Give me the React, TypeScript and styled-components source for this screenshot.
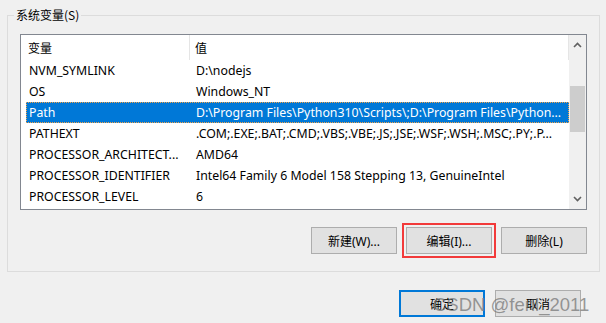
import React from "react";
import styled, { createGlobalStyle } from "styled-components";

const Global = createGlobalStyle`
  html, body { margin: 0; padding: 0; background: #f0f0f0; }
  body { font-family: "Noto Sans", "Noto Sans CJK SC", sans-serif; font-size: 12px; color: #000; }
`;

const Page = styled.div`
  position: relative;
  width: 606px;
  height: 323px;
  box-sizing: border-box;
  padding: 7px 6px 0 7px;
  background: #f0f0f0;
  display: flex;
  flex-direction: column;
  overflow: hidden;
`;

const Group = styled.fieldset`
  margin: 0;
  border: 1px solid #dcdcdc;
  padding: 11px 12px 17px 12px;
  display: flex;
  flex-direction: column;
`;

const Legend = styled.legend`
  margin-left: -6px;
  padding: 0 2px;
  line-height: 16px;
  font-family: "Noto Sans CJK SC", sans-serif;
  font-size: 12px;
`;

const ListBox = styled.div`
  height: 176px;
  box-sizing: border-box;
  border: 1px solid #828790;
  background: #fff;
  display: flex;
`;

const ListMain = styled.div`
  flex: 1;
  min-width: 0;
  display: flex;
  flex-direction: column;
`;

const Header = styled.div`
  height: 25px;
  display: flex;
  align-items: stretch;
  border-right: 1px solid #e5e5e5;
`;

const HeadCell = styled.div<{ $w?: number; $pad: number; $sep?: boolean }>`
  ${(p) => (p.$w ? `width: ${p.$w}px;` : "flex: 1;")}
  box-sizing: border-box;
  padding-left: ${(p) => p.$pad}px;
  display: flex;
  align-items: center;
  font-family: "Noto Sans CJK SC", sans-serif;
  font-size: 12px;
  ${(p) => (p.$sep ? "border-right: 1px solid #e5e5e5;" : "")}
`;

const Row = styled.div<{ $sel?: boolean }>`
  height: 21px;
  margin-left: 5px;
  display: flex;
  align-items: center;
  box-sizing: border-box;
  font-size: 12.3px;
  background: ${(p) => (p.$sel ? "#0078d7" : "transparent")};
  color: ${(p) => (p.$sel ? "#fff" : "#000")};
  ${(p) => (p.$sel ? "outline: 1px dotted #f2a44a; outline-offset: -1px;" : "")}
`;

const Cell = styled.div<{ $w?: number; $pad: number }>`
  ${(p) => (p.$w ? `width: ${p.$w}px;` : "flex: 1;")}
  min-width: 0;
  box-sizing: border-box;
  padding-left: ${(p) => p.$pad}px;
  padding-right: 6px;
  white-space: nowrap;
  overflow: hidden;
  text-overflow: ellipsis;
`;

const ScrollBar = styled.div`
  width: 17px;
  background: #f0f0f0;
  display: flex;
  flex-direction: column;
  align-items: center;
`;

const Arrow = styled.div`
  height: 20px;
  width: 17px;
  display: flex;
  align-items: center;
  justify-content: center;
`;

const Track = styled.div`
  flex: 1;
  width: 100%;
  position: relative;
`;

const Thumb = styled.div`
  position: absolute;
  left: 1px;
  right: 1px;
  top: 31px;
  height: 46px;
  background: #cdcdcd;
`;

const ButtonRow = styled.div<{ $gap: number; $top?: number }>`
  display: flex;
  justify-content: flex-end;
  gap: ${(p) => p.$gap}px;
  margin-top: ${(p) => p.$top ?? 0}px;
`;

const Btn = styled.button<{ $primary?: boolean; $marked?: boolean }>`
  width: 86px;
  height: 27px;
  box-sizing: border-box;
  background: #e1e1e1;
  border: ${(p) => (p.$primary ? "2px solid #0078d7" : "1px solid #adadad")};
  padding: 0;
  font-family: "Noto Sans", "Noto Sans CJK SC", sans-serif;
  font-size: 12px;
  color: #000;
  ${(p) => (p.$marked ? "outline: 2px solid #f23a3a; outline-offset: 2px;" : "")}
`;

const Footer = styled.div`
  margin-top: 18px;
  padding-right: 19px;
`;

const Watermark = styled.div`
  position: absolute;
  left: 433px;
  top: 294px;
  font-family: "Liberation Sans", Arial, sans-serif;
  font-size: 18.5px;
  color: rgba(120, 120, 120, 0.75);
  white-space: nowrap;
  pointer-events: none;
`;

const Chevron = ({ up }: { up?: boolean }) => (
  <svg width="9" height="6" viewBox="0 0 9 6">
    <path
      d={up ? "M1 5 L4.5 1.5 L8 5" : "M1 1 L4.5 4.5 L8 1"}
      fill="none"
      stroke="#606060"
      strokeWidth="1.6"
    />
  </svg>
);

const rows: [string, string][] = [
  ["NVM_SYMLINK", "D:\\nodejs"],
  ["OS", "Windows_NT"],
  ["Path", "D:\\Program Files\\Python310\\Scripts\\;D:\\Program Files\\Python..."],
  ["PATHEXT", ".COM;.EXE;.BAT;.CMD;.VBS;.VBE;.JS;.JSE;.WSF;.WSH;.MSC;.PY;.P..."],
  ["PROCESSOR_ARCHITECT...", "AMD64"],
  ["PROCESSOR_IDENTIFIER", "Intel64 Family 6 Model 158 Stepping 13, GenuineIntel"],
  ["PROCESSOR_LEVEL", "6"],
];

export default function App() {
  return (
    <Page>
      <Global />
      <Group>
        <Legend>系统变量(S)</Legend>
        <ListBox>
          <ListMain>
            <Header>
              <HeadCell $w={169} $pad={7} $sep>变量</HeadCell>
              <HeadCell $pad={5}>值</HeadCell>
            </Header>
            {rows.map(([k, v], i) => (
              <Row key={k} $sel={i === 2}>
                <Cell $w={164} $pad={3}>{k}</Cell>
                <Cell $pad={6}>{v}</Cell>
              </Row>
            ))}
          </ListMain>
          <ScrollBar>
            <Arrow><Chevron up /></Arrow>
            <Track><Thumb /></Track>
            <Arrow><Chevron /></Arrow>
          </ScrollBar>
        </ListBox>
        <ButtonRow $gap={9} $top={17}>
          <Btn>新建(W)...</Btn>
          <Btn $marked>编辑(I)...</Btn>
          <Btn>删除(L)</Btn>
        </ButtonRow>
      </Group>
      <Footer>
        <ButtonRow $gap={10}>
          <Btn $primary>确定</Btn>
          <Btn>取消</Btn>
        </ButtonRow>
      </Footer>
      <Watermark>CSDN @fenl_2011</Watermark>
    </Page>
  );
}
